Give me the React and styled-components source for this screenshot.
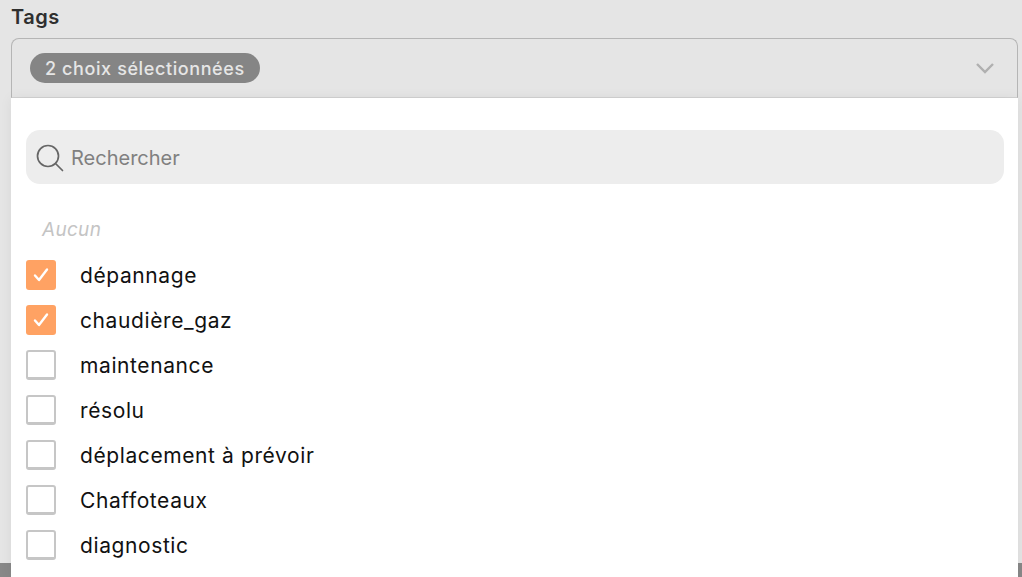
import React from 'react';
import styled, { createGlobalStyle } from 'styled-components';

const tags = [
  { label: 'dépannage', checked: true },
  { label: 'chaudière_gaz', checked: true },
  { label: 'maintenance' },
  { label: 'résolu' },
  { label: 'déplacement à prévoir' },
  { label: 'Chaffoteaux' },
  { label: 'diagnostic' },
];

const App = () => (
  <>
    <GlobalStyle />
    <Page>
      <Content>
        <Label>Tags</Label>
        <Field>
          <SelectBox>
            <Pill>2 choix sélectionnées</Pill>
            <Chevron width="20" height="12" viewBox="0 0 20 12">
              <path d="M2 2l8 8 8-8" />
            </Chevron>
          </SelectBox>
          <Menu>
            <SearchBar>
              <SearchIcon width="30" height="30" viewBox="0 0 30 30">
                <circle cx="13" cy="13" r="10.5" />
                <path d="M20.5 20.5l7 7" />
              </SearchIcon>
              <SearchText>Rechercher</SearchText>
            </SearchBar>
            <NoneOption>Aucun</NoneOption>
            <List>
              {tags.map(tag => (
                <Row key={tag.label}>
                  <Box $checked={tag.checked}>
                    {tag.checked && (
                      <svg width="20" height="20" viewBox="0 0 20 20">
                        <path d="M4 10.5l4 4.5 8-10.5" fill="none" stroke="#fff" strokeWidth="2.4" strokeLinecap="round" strokeLinejoin="round" />
                      </svg>
                    )}
                  </Box>
                  <RowLabel>{tag.label}</RowLabel>
                </Row>
              ))}
            </List>
          </Menu>
        </Field>
      </Content>
      <FooterStrip />
    </Page>
  </>
);

const GlobalStyle = createGlobalStyle`
  html, body {
    margin: 0;
    padding: 0;
    height: 100%;
    overflow: hidden;
  }

  body {
    font-family: Inter, "Noto Sans", sans-serif;
  }
`;

const Page = styled.div`
  position: relative;
  width: 1022px;
  height: 577px;
  overflow: hidden;
  display: flex;
  flex-direction: column;
  background: #e5e5e5;
`;

const Content = styled.div`
  flex: 1;
  padding: 0 4px 0 11px;
`;

const Label = styled.div`
  height: 38px;
  padding-top: 5px;
  box-sizing: border-box;
  font-size: 20px;
  line-height: 24px;
  font-weight: 600;
  letter-spacing: 0.5px;
  color: #2f2f2f;
`;

const Field = styled.div`
  position: relative;
`;

const SelectBox = styled.div`
  height: 60px;
  box-sizing: border-box;
  display: flex;
  align-items: center;
  justify-content: space-between;
  padding: 0 22px 0 18px;
  border: 1px solid #b5b5b5;
  border-bottom-color: #d2d2d2;
  border-radius: 8px 8px 0 0;
`;

const Pill = styled.span`
  height: 30px;
  box-sizing: border-box;
  padding: 0 15px;
  display: inline-flex;
  align-items: center;
  border-radius: 15px;
  background: #858585;
  color: #e6e6e6;
  font-size: 18px;
  font-weight: 500;
  letter-spacing: 0.6px;
  white-space: nowrap;
`;

const Chevron = styled.svg`
  fill: none;
  stroke: #b0b0b0;
  stroke-width: 2.4;
`;

const Menu = styled.div`
  position: absolute;
  top: 60px;
  left: 0;
  right: 0;
  height: 480px;
  box-sizing: border-box;
  padding: 32px 14px 0 15px;
  background: #fff;
  box-shadow: 0 0 12px rgba(0, 0, 0, 0.06);
`;

const SearchBar = styled.div`
  height: 54px;
  box-sizing: border-box;
  display: flex;
  align-items: center;
  gap: 6px;
  padding: 2px 9px 0;
  border-radius: 14px;
  background: #ededed;
`;

const SearchIcon = styled.svg`
  fill: none;
  stroke: #666;
  stroke-width: 1.7;
  stroke-linecap: round;
`;

const SearchText = styled.span`
  font-size: 20px;
  color: #808080;
`;

const NoneOption = styled.div`
  height: 30px;
  margin-top: 31px;
  padding-left: 16px;
  font-size: 19px;
  line-height: 30px;
  font-style: italic;
  letter-spacing: 0.3px;
  color: #c4c4c4;
`;

const List = styled.div`
  margin-top: 15px;
  display: flex;
  flex-direction: column;
  gap: 15px;
`;

const Row = styled.div`
  height: 30px;
  display: flex;
  align-items: center;
  gap: 24px;
`;

const Box = styled.span`
  width: 30px;
  height: 30px;
  box-sizing: border-box;
  display: flex;
  align-items: center;
  justify-content: center;
  border-radius: 3px;
  background: ${p => (p.$checked ? '#ffa263' : '#fff')};
  border: ${p => (p.$checked ? '0' : '2px solid #c6c6c6')};
  border-bottom-width: ${p => (p.$checked ? '0' : '3px')};
`;

const RowLabel = styled.span`
  font-size: 21px;
  font-weight: 430;
  letter-spacing: 0.6px;
  color: #111;
  white-space: nowrap;
`;

const FooterStrip = styled.div`
  height: 14px;
  background: #888;
`;

export default App;
